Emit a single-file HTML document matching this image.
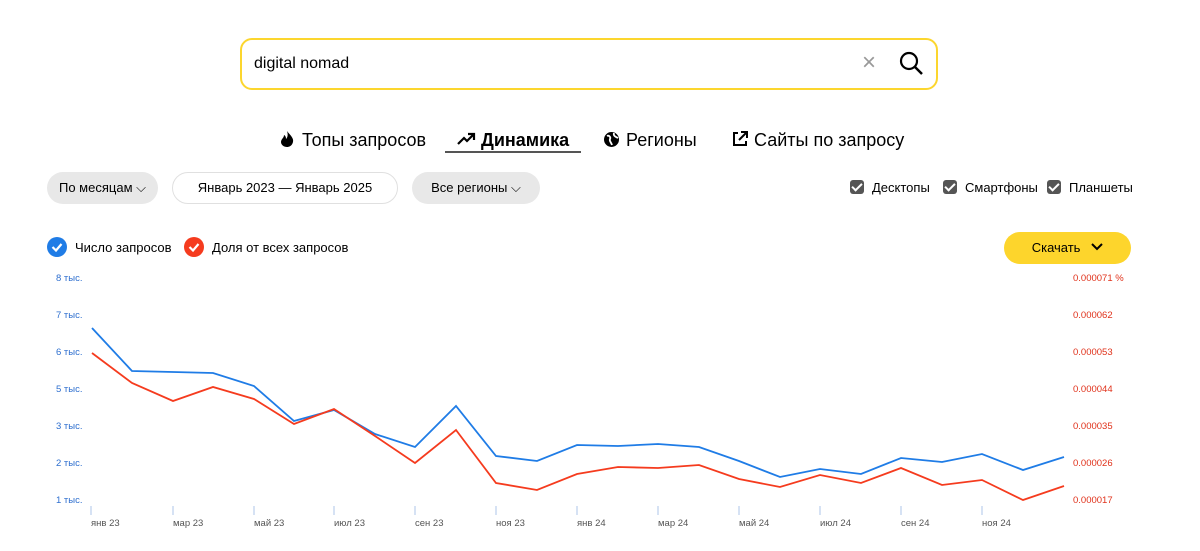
<!DOCTYPE html>
<html><head><meta charset="utf-8"><style>
body{margin:0;width:1200px;height:551px;background:#fff;font-family:"Liberation Sans",sans-serif;position:relative;overflow:hidden;color:#000}
.a{position:absolute}
.pill{position:absolute;height:32px;border-radius:16px;background:#e8e8e8;font-size:13px;line-height:32px;text-align:center}
.cb{display:inline-block;width:14px;height:14px;background:#555;border-radius:3px;vertical-align:-2px;margin-right:8px;position:relative}
.cb:after{content:"";position:absolute;left:4px;top:1px;width:4px;height:8px;border:solid #fff;border-width:0 2px 2px 0;transform:rotate(45deg)}
.yl{position:absolute;font-size:9.5px;color:#2e6fcf;left:56px}
.yr{position:absolute;font-size:9.5px;color:#e0321b;left:1073px}
.xl{position:absolute;font-size:9.5px;color:#555;top:518px}
.tab{position:absolute;top:130px;font-size:18px}
</style></head><body>
<div class="a" style="left:240px;top:38px;width:694px;height:48px;border:2px solid #fcd62e;border-radius:12px"></div>
<div class="a" style="left:254px;top:55px;font-size:16px">digital nomad</div>
<div class="a" style="left:862px;top:49px;font-size:24px;color:#999;line-height:28px">×</div>
<svg class="a" style="left:899px;top:51px" width="26" height="26"><circle cx="10" cy="10" r="8" fill="none" stroke="#000" stroke-width="2.2"/><path d="M16 16 L23 23" stroke="#000" stroke-width="2.5"/></svg>

<svg class="a" style="left:278px;top:130px" width="18" height="18"><path d="M9 1 C12 5 16 8 15 12 C14 16 11 17 9 17 C6 17 3 15 3 12 C3 9 6 8 6 5 C8 6 8 8 8 9 C10 7 10 4 9 1Z" fill="#000"/></svg>
<div class="tab" style="left:302px">Топы запросов</div>
<svg class="a" style="left:457px;top:132px" width="20" height="14"><path d="M1 12 L7 6 L10 9 L17 2 M11 2 H17 V8" fill="none" stroke="#000" stroke-width="2.2"/></svg>
<div class="tab" style="left:481px;font-weight:bold">Динамика</div>
<div class="a" style="left:445px;top:151px;width:136px;height:2px;background:#555"></div>
<svg class="a" style="left:603px;top:131px" width="17" height="17"><circle cx="8.5" cy="8.5" r="7.5" fill="#000"/><path d="M4 5 C6 4 8 6 7 8 C6 10 8 11 9 14 M11 2 C10 5 13 6 15 7" stroke="#fff" stroke-width="1.8" fill="none"/></svg>
<div class="tab" style="left:626px">Регионы</div>
<svg class="a" style="left:731px;top:130px" width="18" height="18"><path d="M7 3 H3 V15 H15 V11 M10 2 H16 V8 M16 2 L8 10" fill="none" stroke="#000" stroke-width="2"/></svg>
<div class="tab" style="left:754px">Сайты по запросу</div>

<div class="pill" style="left:47px;top:172px;width:111px">По месяцам ⌵</div>
<div class="pill" style="left:172px;top:172px;width:224px;background:#fff;border:1px solid #e0e0e0;height:30px;line-height:30px">Январь 2023 — Январь 2025</div>
<div class="pill" style="left:412px;top:172px;width:128px">Все регионы ⌵</div>
<div class="a" style="left:850px;top:180px;font-size:13px"><span class="cb"></span>Десктопы</div>
<div class="a" style="left:943px;top:180px;font-size:13px"><span class="cb"></span>Смартфоны</div>
<div class="a" style="left:1047px;top:180px;font-size:13px"><span class="cb"></span>Планшеты</div>

<svg class="a" style="left:47px;top:237px" width="20" height="20"><circle cx="10" cy="10" r="10" fill="#1f7ce6"/><path d="M5.5 10 L9 13.5 L14.5 7" stroke="#fff" stroke-width="2.2" fill="none"/></svg>
<div class="a" style="left:75px;top:240px;font-size:13px">Число запросов</div>
<svg class="a" style="left:184px;top:237px" width="20" height="20"><circle cx="10" cy="10" r="10" fill="#f53b1e"/><path d="M5.5 10 L9 13.5 L14.5 7" stroke="#fff" stroke-width="2.2" fill="none"/></svg>
<div class="a" style="left:212px;top:240px;font-size:13px">Доля от всех запросов</div>
<div class="a" style="left:1004px;top:232px;width:127px;height:32px;border-radius:16px;background:#fdd52c;font-size:13px;line-height:32px;text-align:center">Скачать &nbsp;&nbsp;<svg width="12" height="8" style="vertical-align:1px"><path d="M1 1 L6 6 L11 1" stroke="#000" stroke-width="2" fill="none"/></svg></div>

<div class="yl" style="top:273px">8 тыс.</div><div class="yl" style="top:310px">7 тыс.</div><div class="yl" style="top:347px">6 тыс.</div><div class="yl" style="top:384px">5 тыс.</div><div class="yl" style="top:421px">3 тыс.</div><div class="yl" style="top:458px">2 тыс.</div><div class="yl" style="top:495px">1 тыс.</div>
<div class="yr" style="top:273px">0.000071 %</div><div class="yr" style="top:310px">0.000062</div><div class="yr" style="top:347px">0.000053</div><div class="yr" style="top:384px">0.000044</div><div class="yr" style="top:421px">0.000035</div><div class="yr" style="top:458px">0.000026</div><div class="yr" style="top:495px">0.000017</div>

<svg class="a" style="left:0;top:0" width="1200" height="551">
<g stroke="#c8d8f0" stroke-width="1.5"><path d="M91 506 V515 M173 506 V515 M254 506 V515 M334 506 V515 M415 506 V515 M496 506 V515 M577 506 V515 M658 506 V515 M739 506 V515 M820 506 V515 M901 506 V515 M982 506 V515"/></g>
<polyline fill="none" stroke="#1f7ce6" stroke-width="1.8" points="92,328 132,371 173,372 213,373 254,386 294,421 334,410 375,434 415,447 456,406 496,456 537,461 577,445 618,446 658,444 699,447 739,461 780,477 820,469 861,474 901,458 942,462 982,454 1023,470 1064,457"/>
<polyline fill="none" stroke="#f53b1e" stroke-width="1.8" points="92,353 132,383 173,401 213,387 254,399 294,424 334,409 375,436 415,463 456,430 496,483 537,490 577,474 618,467 658,468 699,465 739,479 780,487 820,475 861,483 901,468 942,485 982,480 1023,500 1064,486"/>
</svg>
<div class="xl" style="left:91px">янв 23</div><div class="xl" style="left:173px">мар 23</div><div class="xl" style="left:254px">май 23</div><div class="xl" style="left:334px">июл 23</div><div class="xl" style="left:415px">сен 23</div><div class="xl" style="left:496px">ноя 23</div><div class="xl" style="left:577px">янв 24</div><div class="xl" style="left:658px">мар 24</div><div class="xl" style="left:739px">май 24</div><div class="xl" style="left:820px">июл 24</div><div class="xl" style="left:901px">сен 24</div><div class="xl" style="left:982px">ноя 24</div>
</body></html>
